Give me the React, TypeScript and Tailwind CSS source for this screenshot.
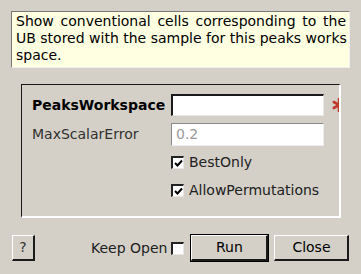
import React from "react";

const sunken =
  "border-t-2 border-l-2 border-b border-r border-t-[#1a1a1a] border-l-[#1a1a1a] border-b-[#e8e6e2] border-r-[#e8e6e2]";

function CheckBox({ checked }: { checked?: boolean }) {
  return (
    <div className="w-[13px] h-[13px] bg-white border-t-2 border-l-2 border-b border-r border-t-[#222] border-l-[#222] border-b-[#e8e6e2] border-r-[#e8e6e2] flex items-center justify-center">
      {checked && (
        <svg width="9" height="9" viewBox="0 0 9 9">
          <path d="M1 4 L3.5 6.5 L8 1.5" stroke="#000" strokeWidth="2" fill="none" />
        </svg>
      )}
    </div>
  );
}

function Btn({ children, className = "" }: { children: React.ReactNode; className?: string }) {
  return (
    <div
      className={
        "flex items-center justify-center bg-[#d4d0c8] border-t border-l border-b-2 border-r-2 border-t-white border-l-white border-b-[#1a1a1a] border-r-[#1a1a1a] " +
        className
      }
    >
      {children}
    </div>
  );
}

export default function App() {
  return (
    <div
      className="w-[361px] h-[274px] bg-[#d4d0c8] text-[14px] text-black overflow-hidden"
      style={{ fontFamily: '"DejaVu Sans", sans-serif' }}
    >
      <div className="pt-[11px] pl-[11px]">
        <div className="w-[339px] h-[57px] bg-[#ffffe1] border-t border-l border-t-[#7a7a7a] border-l-[#7a7a7a] border-b border-r border-b-[#f0f0f0] border-r-[#f0f0f0] pl-[4px] pr-[3px] pt-[1px] leading-[17px]">
          <div className="text-justify [text-align-last:justify] whitespace-nowrap">
            Show conventional cells corresponding to the
          </div>
          <div className="text-justify [text-align-last:justify] whitespace-nowrap">
            UB stored with the sample for this peaks works
          </div>
          <div>space.</div>
        </div>
      </div>

      <div className="pl-[21px] pt-[16px]">
        <div className="relative w-[320px] h-[134px] overflow-hidden border-t border-l border-t-[#1a1a1a] border-l-[#1a1a1a] border-b-2 border-r-2 border-b-white border-r-white pt-[9px] pl-[10px]">
          <div className="flex items-center h-[22px]">
            <div className="w-[139px] font-bold">PeaksWorkspace</div>
            <div className={"w-[153px] h-[22px] bg-white " + sunken}></div>
          </div>
          <div className="flex items-center h-[23px] mt-[7px]">
            <div className="w-[139px] text-[#303030]">MaxScalarError</div>
            <div className="w-[153px] h-[23px] bg-white border border-t-[#8a8a8a] border-l-[#8a8a8a] border-b-[#eeeeee] border-r-[#eeeeee] flex items-center pl-[4px] text-[#9a9a9a]">
              0.2
            </div>
          </div>
          <div className="flex items-center h-[17px] mt-[8px] pl-[139px]">
            <CheckBox checked />
            <span className="ml-[5px] text-[#202020]">BestOnly</span>
          </div>
          <div className="flex items-center h-[17px] mt-[11px] pl-[139px]">
            <CheckBox checked />
            <span className="ml-[5px] text-[#202020]">AllowPermutations</span>
          </div>
          <svg
            className="absolute left-[310px] top-[13px]"
            width="14"
            height="14"
            viewBox="0 0 14 14"
          >
            <g stroke="#c0392b" strokeWidth="2.6" strokeLinecap="round">
              <path d="M7 1 L7 13" />
              <path d="M1.8 4 L12.2 10" />
              <path d="M1.8 10 L12.2 4" />
            </g>
          </svg>
        </div>
      </div>

      <div className="flex items-center pl-[12px] pt-[16px]">
        <Btn className="w-[23px] h-[26px] text-[#333]">?</Btn>
        <span className="ml-[56px] text-[#202020]">Keep Open</span>
        <div className="ml-[4px]">
          <CheckBox />
        </div>
        <div className="ml-[6px] w-[79px] h-[28px] border border-black">
          <Btn className="w-full h-full">Run</Btn>
        </div>
        <Btn className="ml-[5px] w-[75px] h-[26px]">Close</Btn>
      </div>
    </div>
  );
}
